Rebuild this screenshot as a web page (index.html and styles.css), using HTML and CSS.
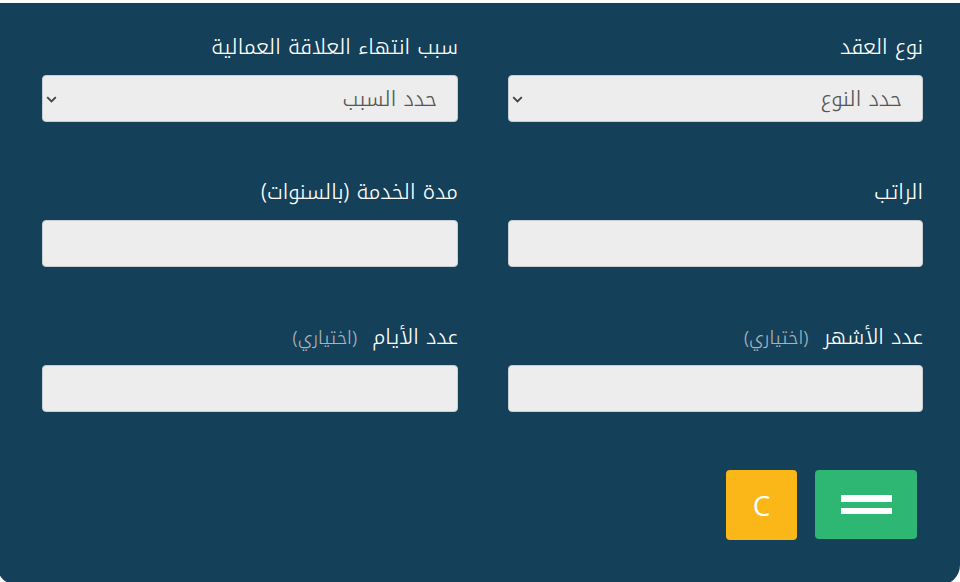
FILE: index.html
```html
<!DOCTYPE html>
<html lang="ar" dir="rtl">
<head>
<meta charset="utf-8">
<title>حاسبة نهاية الخدمة</title>
<link rel="stylesheet" href="styles.css">
</head>
<body>
<div class="panel">
  <form class="form">
    <div class="field">
      <label class="label">نوع العقد</label>
      <div class="select-wrap">
        <select class="control select">
          <option>حدد النوع</option>
        </select>
        <svg class="chev" width="11" height="7" viewBox="0 0 11 7"><path d="M1.2 1.2l4.3 4.3 4.3-4.3" fill="none" stroke="#444" stroke-width="1.9"/></svg>
      </div>
    </div>
    <div class="field">
      <label class="label">سبب انتهاء العلاقة العمالية</label>
      <div class="select-wrap">
        <select class="control select">
          <option>حدد السبب</option>
        </select>
        <svg class="chev" width="11" height="7" viewBox="0 0 11 7"><path d="M1.2 1.2l4.3 4.3 4.3-4.3" fill="none" stroke="#444" stroke-width="1.9"/></svg>
      </div>
    </div>
    <div class="field">
      <label class="label">الراتب</label>
      <input class="control" type="text">
    </div>
    <div class="field">
      <label class="label">مدة الخدمة (بالسنوات)</label>
      <input class="control" type="text">
    </div>
    <div class="field">
      <label class="label">عدد الأشهر <span class="opt">(اختياري)</span></label>
      <input class="control" type="text">
    </div>
    <div class="field">
      <label class="label">عدد الأيام <span class="opt">(اختياري)</span></label>
      <input class="control" type="text">
    </div>
    <div class="actions">
      <button type="button" class="btn btn-eq"><span class="bar"></span><span class="bar bar2"></span></button>
      <button type="button" class="btn btn-c">C</button>
    </div>
  </form>
</div>
</body>
</html>
```
FILE: styles.css
```css
html, body {
  margin: 0;
  padding: 0;
  overflow: hidden;
  background: #ffffff;
}
body {
  width: 960px;
  height: 582px;
  font-family: "Noto Kufi Arabic", "Droid Arabic Kufi", "Noto Sans Arabic", "DejaVu Sans", sans-serif;
}
.panel {
  margin-top: 3px;
  width: 963px;
  height: 582px;
  background: #14405a;
  border-radius: 0 0 20px 20px;
  box-sizing: border-box;
  padding: 32px 37px 0 42px;
}
.form {
  display: grid;
  grid-template-columns: 415px 416px;
  column-gap: 50px;
  row-gap: 58px;
  direction: rtl;
  width: 881px;
}
.field {
  display: flex;
  flex-direction: column;
  gap: 16px;
}
.label {
  color: #ffffff;
  font-size: 21px;
  font-weight: 300;
  line-height: 24px;
  height: 24px;
  white-space: nowrap;
}
.opt {
  color: #a9b3ba;
  font-size: 18px;
  margin-right: 8px;
}
.control {
  display: block;
  width: 100%;
  height: 47px;
  box-sizing: border-box;
  background: #ededed;
  border: 1px solid #c8cdd1;
  border-radius: 4px;
  font-family: inherit;
  font-size: 21px;
  font-weight: 300;
  color: #555555;
  padding: 0 20px;
  margin: 0;
  outline: none;
}
.select {
  appearance: none;
  -webkit-appearance: none;
  direction: rtl;
}
.select-wrap {
  position: relative;
}
.chev {
  position: absolute;
  left: 4px;
  top: 21px;
}
.actions {
  grid-column: 1 / span 2;
  display: flex;
  gap: 18px;
  padding-right: 6px;
}
.btn {
  border: none;
  border-radius: 4px;
  padding: 0;
  margin: 0;
  color: #ffffff;
  cursor: pointer;
}
.btn-c {
  width: 71px;
  height: 70px;
  background: #fbb617;
  font-family: "Open Sans", sans-serif;
  font-weight: 400;
  font-size: 28px;
  line-height: 70px;
}
.btn-eq {
  width: 102px;
  height: 69px;
  background: #2eb673;
  display: flex;
  flex-direction: column;
  align-items: center;
  justify-content: center;
  gap: 6px;
}
.bar {
  display: block;
  width: 51px;
  height: 7px;
  background: #ffffff;
}
.bar2 {
  height: 6px;
}
```
